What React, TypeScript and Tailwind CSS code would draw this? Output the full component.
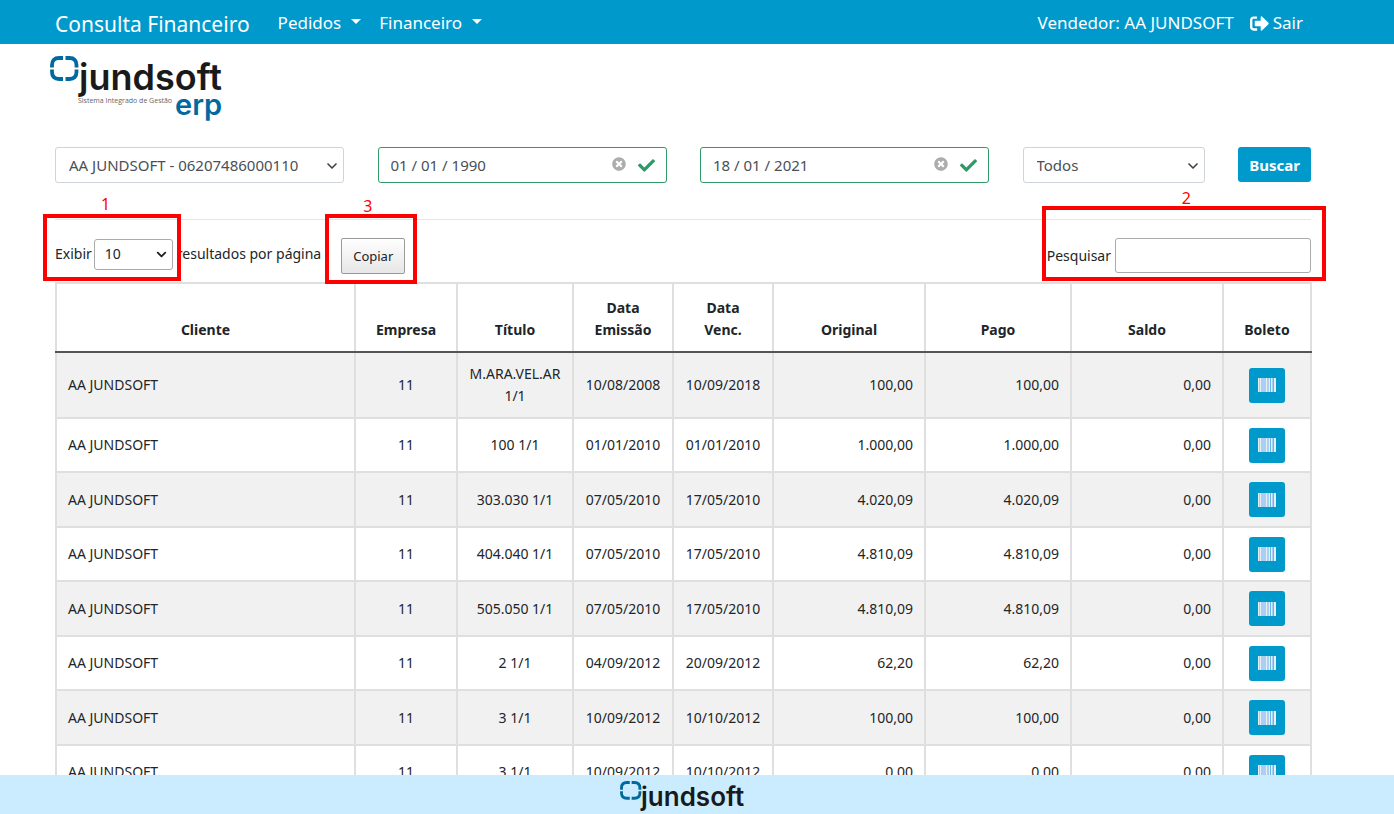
import React from "react";
import { FaSignOutAlt, FaCheck, FaTimesCircle } from "react-icons/fa";
import { ChevronDown } from "lucide-react";

type Row = {
  titulo: string;
  emissao: string;
  venc: string;
  original: string;
  pago: string;
};

const rows: Row[] = [
  { titulo: "M.ARA.VEL.AR 1/1", emissao: "10/08/2008", venc: "10/09/2018", original: "100,00", pago: "100,00" },
  { titulo: "100 1/1", emissao: "01/01/2010", venc: "01/01/2010", original: "1.000,00", pago: "1.000,00" },
  { titulo: "303.030 1/1", emissao: "07/05/2010", venc: "17/05/2010", original: "4.020,09", pago: "4.020,09" },
  { titulo: "404.040 1/1", emissao: "07/05/2010", venc: "17/05/2010", original: "4.810,09", pago: "4.810,09" },
  { titulo: "505.050 1/1", emissao: "07/05/2010", venc: "17/05/2010", original: "4.810,09", pago: "4.810,09" },
  { titulo: "2 1/1", emissao: "04/09/2012", venc: "20/09/2012", original: "62,20", pago: "62,20" },
  { titulo: "3 1/1", emissao: "10/09/2012", venc: "10/10/2012", original: "100,00", pago: "100,00" },
  { titulo: "3 1/1", emissao: "10/09/2012", venc: "10/10/2012", original: "0,00", pago: "0,00" },
];

const columns = [
  { label: "Cliente", width: "w-[299px]" },
  { label: "Empresa", width: "w-[102px]" },
  { label: "Título", width: "w-[116px]" },
  { label: "Data Emissão", width: "w-[100px]" },
  { label: "Data Venc.", width: "w-[100px]" },
  { label: "Original", width: "w-[152px]" },
  { label: "Pago", width: "w-[146px]" },
  { label: "Saldo", width: "w-[152px]" },
  { label: "Boleto", width: "w-[88px]" },
];

function LogoMark() {
  return (
    <g fill="none" stroke="#0069a0" strokeWidth="3.8">
      <path d="M13 2H9Q2 2 2 9V11.500" />
      <path d="M15.500 2H19.500Q26.500 2 26.500 9V11.500" />
      <path d="M13 23H9Q2 23 2 16V13.500" />
      <path d="M15.500 23H19.500Q26.500 23 26.500 16V13.500" />
    </g>
  );
}

function Logo() {
  return (
    <svg width="180" height="66" viewBox="0 0 180 66" role="img" aria-label="Jundsoft ERP" className="overflow-visible font-[Inter,sans-serif]">
      <g transform="translate(0 2)">
        <LogoMark />
      </g>
      <text x="29" y="36" fontSize="36" fontWeight="600" fill="#1a1a1a">jundsoft</text>
      <text x="28" y="49" fontSize="7" fill="#666" fontFamily="Open Sans">Sistema Integrado de Gestão</text>
      <text x="125" y="61" fontSize="29" fontWeight="600" fill="#0069a0">erp</text>
    </svg>
  );
}

function FooterLogo() {
  return (
    <svg width="130" height="32" viewBox="0 0 130 32" role="img" aria-label="Jundsoft" className="overflow-visible font-[Inter,sans-serif]">
      <g transform="translate(2 2) scale(0.75)">
        <LogoMark />
      </g>
      <text x="23" y="27" fontSize="26" fontWeight="600" fill="#1a1a1a">jundsoft</text>
    </svg>
  );
}

function Barcode() {
  return (
    <svg width="18" height="14" viewBox="0 0 18 14" aria-hidden="true">
      <path fill="#a9cff3" d="M0 0h18v14H0z" />
      <path fill="#e4f0f4" d="M0 0h1v14H0zM2 0h1v14H2zM8 0h1v14H8zM11 0h1v14h-1zM13 0h1v14h-1zM16 0h2v14h-2z" />
      <path fill="#6db6e2" d="M12 0h1v14h-1zM15 0h1v14h-1z" />
    </svg>
  );
}

function Caret() {
  return (
    <svg width="10" height="5" viewBox="0 0 10 5" aria-hidden="true" className="mb-1">
      <path fill="white" d="M0 0h10L5 5z" />
    </svg>
  );
}

function DateField({ label, value }: { label: string; value: string }) {
  return (
    <div className="flex h-9 w-[289px] items-center rounded-[3px] border border-[#2f9a68] bg-white pr-[11px] pl-3">
      <input aria-label={label} defaultValue={value} className="min-w-0 flex-1 bg-transparent pt-0.5 text-[15px] text-[#495057] outline-none" />
      <button type="button" aria-label={`Limpar ${label}`} className="mr-3 mb-0.5 text-[#adadad]">
        <FaTimesCircle size={14} />
      </button>
      <FaCheck size={17} color="#2f9a68" />
    </div>
  );
}

function FilterSelect({ label, value, width }: { label: string; value: string; width: string }) {
  return (
    <div className={`relative ${width}`}>
      <select aria-label={label} className="h-9 w-full appearance-none rounded-[3px] border border-[#ced4da] bg-white px-[13px] pt-0.5 text-[15px] text-[#495057]">
        <option>{value}</option>
      </select>
      <ChevronDown size={16} strokeWidth={2.5} color="#444" className="pointer-events-none absolute top-[11px] right-1" />
    </div>
  );
}

export default function App() {
  const cell = "border-2 border-[#dfdfdf]";
  return (
    <div className="flex h-screen flex-col bg-white font-['Noto_Sans',sans-serif] text-sm text-[#212529]">
      <header className="flex h-11 shrink-0 items-center bg-[#0099cc] pt-[3px] pr-[91px] pl-[55px] text-[17px] text-white">
        <a href="#" className="mr-7 text-[21px]">Consulta Financeiro</a>
        <nav className="flex gap-[18px]">
          <a href="#" className="flex items-center gap-[10px]">Pedidos <Caret /></a>
          <a href="#" className="flex items-center gap-[10px]">Financeiro <Caret /></a>
        </nav>
        <span className="mr-4 ml-auto">Vendedor: AA JUNDSOFT</span>
        <a href="#" className="flex items-center gap-1"><FaSignOutAlt size={19} />Sair</a>
      </header>

      <main className="min-h-0 flex-1 overflow-y-auto pr-[83px] pl-[55px] [scrollbar-width:none]">
        <div className="-ml-[5px] pt-[10px]">
          <Logo />
        </div>

        <form className="mt-[27px] flex justify-between" onSubmit={(e) => e.preventDefault()}>
          <FilterSelect label="Cliente" value="AA JUNDSOFT - 06207486000110" width="w-[289px]" />
          <DateField label="Data inicial" value="01 / 01 / 1990" />
          <DateField label="Data final" value="18 / 01 / 2021" />
          <FilterSelect label="Situação" value="Todos" width="w-[182px]" />
          <button type="submit" className="h-[35px] w-[73px] rounded-[3px] bg-[#0099cc] pt-0.5 text-[15px] font-bold text-white">Buscar</button>
        </form>

        <hr className="mt-9 border-[#e5e5e5]" />

        <div className="flex h-[62px] items-start pt-[18px]">
          <div className="relative flex h-8 items-center">
            <label htmlFor="len">Exibir</label>
            <div className="relative mr-1 ml-0.5">
              <select id="len" className="h-[31px] w-[79px] appearance-none rounded-[3px] border border-[#aaa] bg-white px-[10px]">
                <option>10</option>
              </select>
              <ChevronDown size={15} strokeWidth={3} color="#222" className="pointer-events-none absolute top-2 right-1" />
            </div>
            <div className="pointer-events-none absolute -top-6 -right-1 -bottom-[11px] -left-3 border-4 border-[#ff0000]" />
            <span className="pointer-events-none absolute -top-[46px] left-[46px] text-base text-[#ff0000]">1</span>
          </div>
          <span className="flex h-8 items-center">resultados por página</span>
          <div className="relative ml-5">
            <button type="button" className="h-9 w-16 rounded-[2px] border border-[#999] bg-linear-to-b from-white to-[#e6e6e6] text-[13px] text-[#222]">Copiar</button>
            <div className="pointer-events-none absolute -top-6 -right-3 -bottom-[10px] -left-4 border-4 border-[#ff0000]" />
            <span className="pointer-events-none absolute -top-[44px] left-[22px] text-base text-[#ff0000]">3</span>
          </div>
          <div className="relative ml-auto flex items-center gap-1">
            <label htmlFor="search">Pesquisar</label>
            <input id="search" type="text" className="h-[35px] w-[196px] rounded-[3px] border border-[#aaa] bg-white px-1" />
            <div className="pointer-events-none absolute -top-8 -right-[15px] -bottom-2 -left-[5px] border-4 border-[#ff0000]" />
            <span className="pointer-events-none absolute -top-[52px] left-[135px] text-base text-[#ff0000]">2</span>
          </div>
        </div>

        <table className="w-full table-fixed border-collapse">
          <thead>
            <tr className="h-[69px]">
              {columns.map((c) => (
                <th key={c.label} className={`${cell} ${c.width} border-b-[#555] px-[14px] pb-[10px] align-bottom leading-[22px] font-bold`}>
                  {c.label}
                </th>
              ))}
            </tr>
          </thead>
          <tbody>
            {rows.map((r, i) => (
              <tr key={i} className="h-[54px] leading-[22px] odd:h-[55px] odd:bg-[#f1f1f1]">
                <td className={`${cell} px-[11px]`}>AA JUNDSOFT</td>
                <td className={`${cell} text-center`}>11</td>
                <td className={`${cell} px-[10px] py-[10px] text-center`}>{r.titulo}</td>
                <td className={`${cell} text-center`}>{r.emissao}</td>
                <td className={`${cell} text-center`}>{r.venc}</td>
                <td className={`${cell} px-[11px] text-right`}>{r.original}</td>
                <td className={`${cell} px-[11px] text-right`}>{r.pago}</td>
                <td className={`${cell} px-[11px] text-right`}>0,00</td>
                <td className={cell}>
                  <button type="button" aria-label="Boleto" className="mx-auto flex h-[35px] w-9 items-center justify-center rounded-[3px] bg-[#0099cc]">
                    <Barcode />
                  </button>
                </td>
              </tr>
            ))}
          </tbody>
        </table>
      </main>

      <footer className="flex h-[39px] shrink-0 items-center justify-center bg-[#cbecff] pr-[28px]">
        <FooterLogo />
      </footer>
    </div>
  );
}
